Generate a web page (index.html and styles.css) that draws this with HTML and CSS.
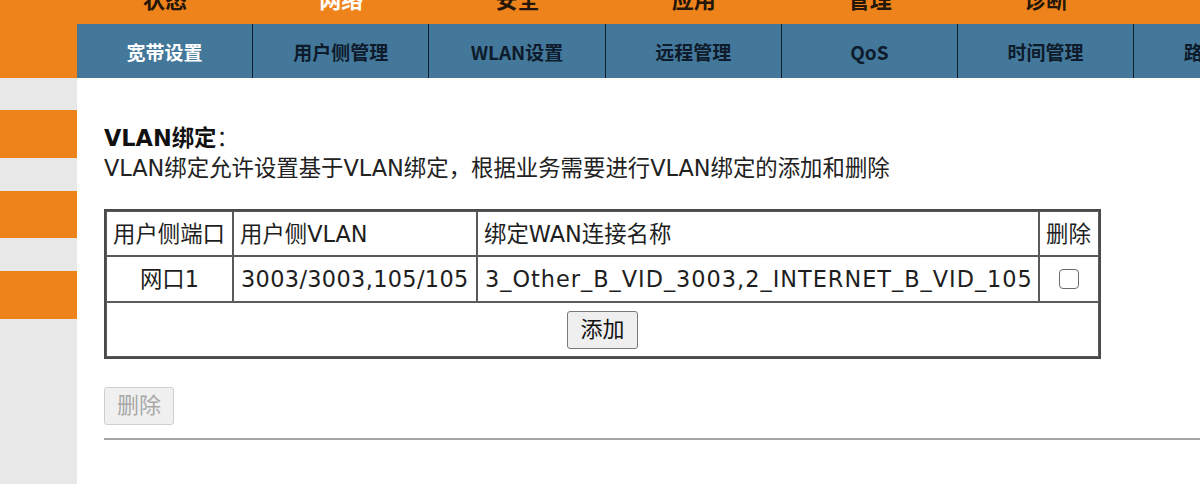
FILE: index.html
```html
<!DOCTYPE html>
<html lang="zh-CN">
<head>
<meta charset="utf-8">
<title>VLAN绑定</title>
<link rel="stylesheet" href="styles.css">
</head>
<body>
<header class="topbar">
  <nav class="topnav">
    <a class="topnav-item">状态</a>
    <a class="topnav-item active">网络</a>
    <a class="topnav-item">安全</a>
    <a class="topnav-item">应用</a>
    <a class="topnav-item">管理</a>
    <a class="topnav-item">诊断</a>
  </nav>
</header>
<div class="layout">
  <aside class="side">
    <div class="side-block orange b1"></div>
    <div class="side-block gray g1"></div>
    <div class="side-block orange b2"></div>
    <div class="side-block gray g2"></div>
    <div class="side-block orange b3"></div>
    <div class="side-block gray g3"></div>
    <div class="side-block orange b4"></div>
    <div class="side-block gray rest"></div>
  </aside>
  <main class="main">
    <nav class="subnav">
      <a class="subnav-item active">宽带设置</a>
      <a class="subnav-item">用户侧管理</a>
      <a class="subnav-item">WLAN设置</a>
      <a class="subnav-item">远程管理</a>
      <a class="subnav-item">QoS</a>
      <a class="subnav-item">时间管理</a>
      <a class="subnav-item">路由设置</a>
    </nav>
    <section class="content">
      <div class="title"><b>VLAN绑定</b>：</div>
      <div class="desc">VLAN绑定允许设置基于VLAN绑定，根据业务需要进行VLAN绑定的添加和删除</div>
      <table class="grid">
        <colgroup>
          <col class="c1"><col class="c2"><col class="c3"><col class="c4">
        </colgroup>
        <tr class="r-head">
          <td>用户侧端口</td>
          <td>用户侧VLAN</td>
          <td>绑定WAN连接名称</td>
          <td>删除</td>
        </tr>
        <tr class="r-data">
          <td class="center">网口1</td>
          <td class="latin">3003/3003,105/105</td>
          <td class="latin-wide">3_Other_B_VID_3003,2_INTERNET_B_VID_105</td>
          <td class="center"><input type="checkbox" class="chk"></td>
        </tr>
        <tr class="r-add">
          <td colspan="4" class="center"><button class="btn">添加</button></td>
        </tr>
      </table>
      <button class="btn btn-del" disabled>删除</button>
      <div class="rule"></div>
    </section>
  </main>
</div>
</body>
</html>
```

FILE: styles.css
```css
* { box-sizing: border-box; }
html, body { margin: 0; padding: 0; }
body {
  width: 1200px;
  height: 484px;
  overflow: hidden;
  background: #ffffff;
  font-family: "DejaVu Sans", "Noto Sans CJK SC", sans-serif;
  color: #1e1e1e;
}

.topbar {
  height: 24px;
  background: #ef831b;
  overflow: hidden;
  padding-left: 77px;
}
.topnav { display: flex; }
.topnav-item {
  width: 176.2px;
  flex: none;
  text-align: center;
  font-family: "Noto Sans CJK SC", sans-serif;
  font-weight: 700;
  font-size: 22px;
  line-height: 22px;
  margin-top: -13px;
  color: #25160a;
}
.topnav-item.active { color: #ffffff; }

.layout {
  display: flex;
  height: 460px;
}
.side {
  width: 77px;
  flex: none;
  display: flex;
  flex-direction: column;
}
.side-block { flex: none; }
.orange { background: #ef831b; }
.gray { background: #e8e8e8; }
.b1 { height: 54px; }
.g1 { height: 32px; }
.b2 { height: 48px; }
.g2 { height: 33px; }
.b3 { height: 47px; }
.g3 { height: 33px; }
.b4 { height: 48px; }
.rest { flex: 1; }

.main {
  flex: 1;
  min-width: 0;
  overflow: hidden;
}
.subnav {
  display: flex;
  height: 54px;
  background: #43789b;
}
.subnav-item {
  width: 176.2px;
  flex: none;
  border-left: 1px solid #0f1c2a;
  display: flex;
  align-items: center;
  justify-content: center;
  font-family: "Noto Sans CJK SC", sans-serif;
  font-weight: 700;
  font-size: 19px;
  color: #0e1b2b;
  white-space: nowrap;
}
.subnav-item:first-child { border-left: none; width: 175.2px; }
.subnav-item.active { color: #ffffff; }

.content {
  padding: 45px 0 0 27px;
  font-size: 22.4px;
  line-height: 30px;
}
.title b { font-weight: 700; color: #111; }
.desc { color: #222; }

.grid {
  margin-top: 26px;
  width: 997px;
  table-layout: fixed;
  border-collapse: separate;
  border-spacing: 0;
  border: 2px solid #4a4a4a;
  font-size: 22.4px;
  line-height: 28px;
}
.c1 { width: 127px; }
.c2 { width: 244px; }
.c3 { width: 562px; }
.c4 { width: 60px; }
.grid td {
  border: 1px solid #5a5a5a;
  padding: 0 6px;
  vertical-align: middle;
  white-space: nowrap;
  overflow: hidden;
  color: #1e1e1e;
}
.grid td.center { text-align: center; }
.grid td.latin { letter-spacing: 0.35px; padding-left: 7px; }
.grid td.latin-wide { letter-spacing: 1px; padding-left: 7px; }
.r-head td { height: 45px; }
.r-data td { height: 46px; }
.r-add td { height: 55px; }

.chk {
  -webkit-appearance: none;
  appearance: none;
  display: block;
  margin: 0 auto;
  width: 20px;
  height: 20px;
  border: 1.5px solid #6a6a6a;
  border-radius: 4px;
  background: #ffffff;
}

.btn {
  font-family: "DejaVu Sans", "Noto Sans CJK SC", sans-serif;
  font-size: 22px;
  line-height: 30px;
  padding: 3px 12px;
  background: #efefef;
  border: 1px solid #7a7a7a;
  border-radius: 3px;
  color: #111;
  vertical-align: middle;
}
.btn-del {
  display: block;
  margin-top: 28px;
  background: #f0f0f0;
  border-color: #cfcfcf;
  color: #a8a8a8;
}
.rule {
  margin-top: 13px;
  height: 2px;
  background: #a5a5a5;
}
```
